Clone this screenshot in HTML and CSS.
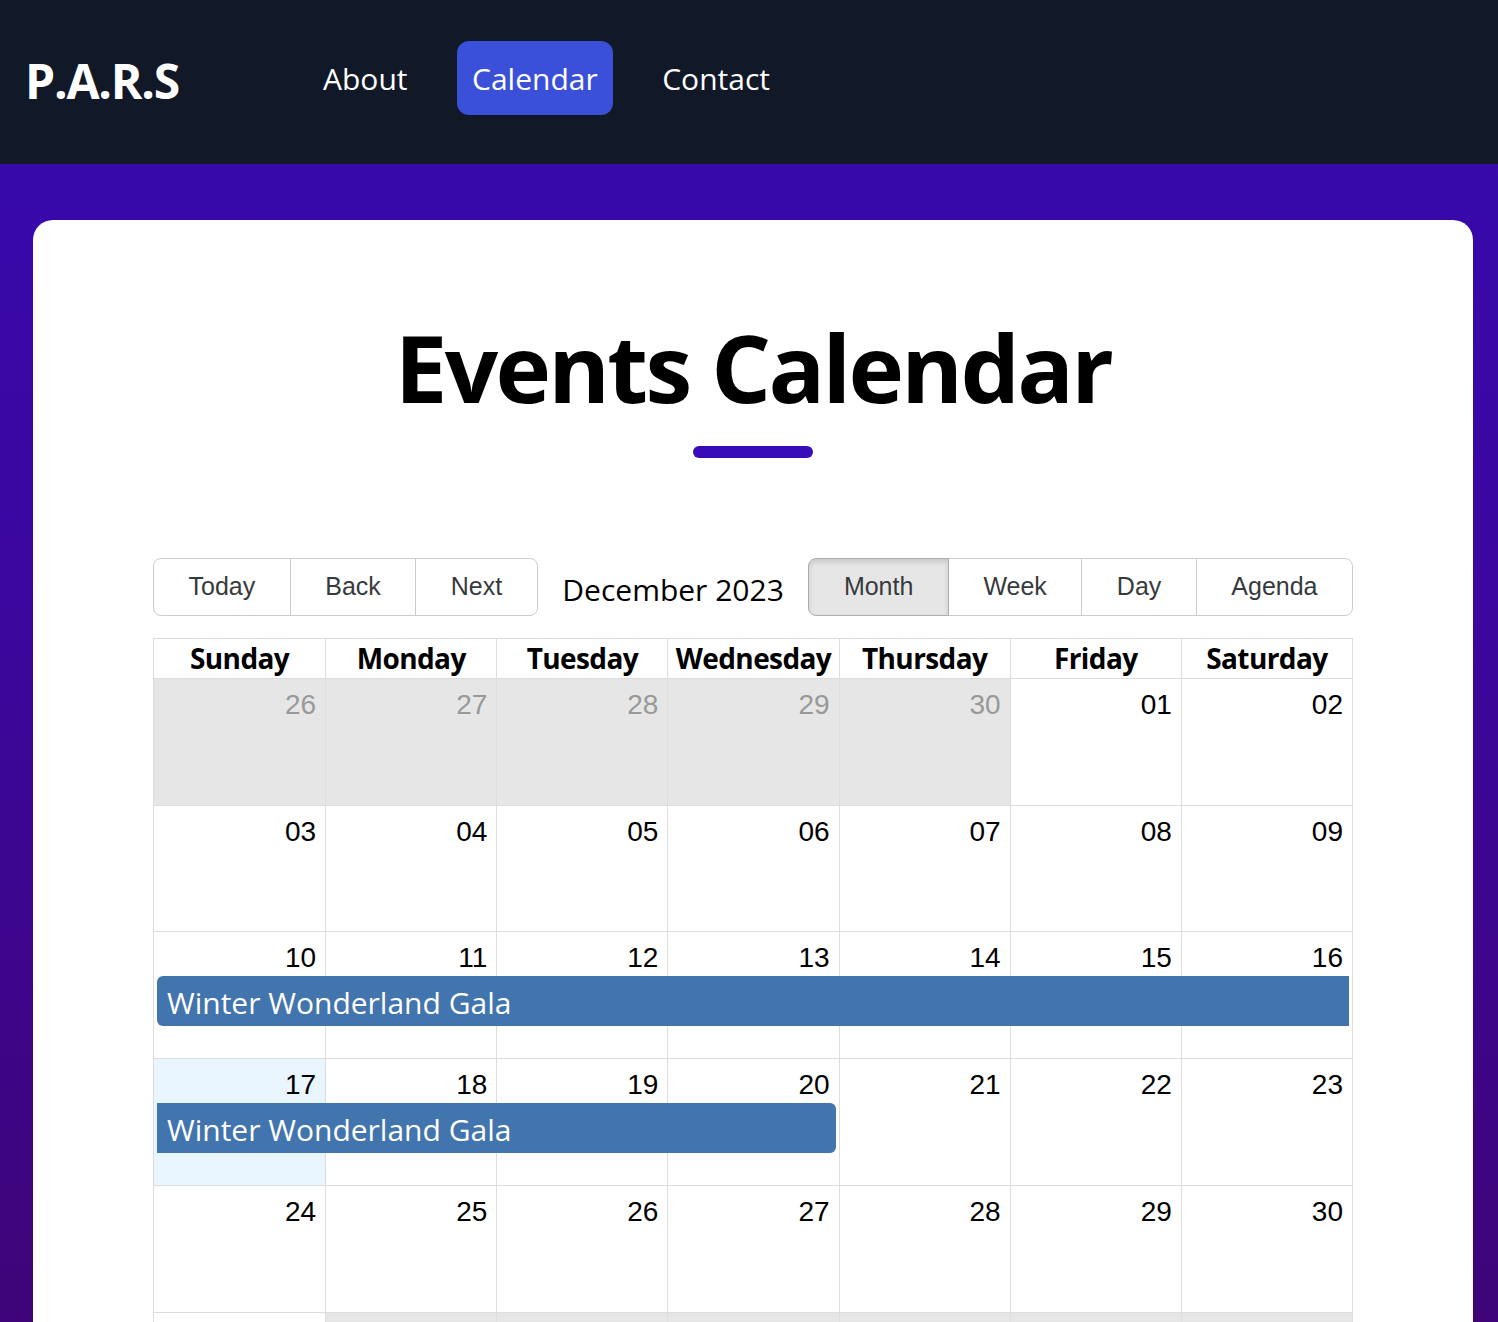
FILE: index.html
```html
<!DOCTYPE html>
<html lang="en">
<head>
<meta charset="utf-8">
<title>P.A.R.S – Events Calendar</title>
<link rel="stylesheet" href="styles.css">
</head>
<body>
<header class="topbar">
  <div class="logo">P.A.R.S</div>
  <nav class="nav">
    <a class="nav-link" href="#">About</a>
    <a class="nav-link active" href="#">Calendar</a>
    <a class="nav-link" href="#">Contact</a>
  </nav>
</header>
<main class="main">
  <section class="card">
    <h1 class="title">Events Calendar</h1>
    <div class="title-bar"></div>

    <div class="calendar">
      <div class="toolbar">
        <div class="btn-group">
          <button class="btn">Today</button>
          <button class="btn">Back</button>
          <button class="btn">Next</button>
        </div>
        <div class="label">December 2023</div>
        <div class="btn-group">
          <button class="btn active">Month</button>
          <button class="btn">Week</button>
          <button class="btn">Day</button>
          <button class="btn">Agenda</button>
        </div>
      </div>

      <div class="month">
        <div class="head">
          <div class="hcell">Sunday</div>
          <div class="hcell">Monday</div>
          <div class="hcell">Tuesday</div>
          <div class="hcell">Wednesday</div>
          <div class="hcell">Thursday</div>
          <div class="hcell">Friday</div>
          <div class="hcell">Saturday</div>
        </div>

        <div class="week">
          <div class="day off"><div class="num">26</div></div>
          <div class="day off"><div class="num">27</div></div>
          <div class="day off"><div class="num">28</div></div>
          <div class="day off"><div class="num">29</div></div>
          <div class="day off"><div class="num">30</div></div>
          <div class="day"><div class="num">01</div></div>
          <div class="day"><div class="num">02</div></div>
        </div>

        <div class="week">
          <div class="day"><div class="num">03</div></div>
          <div class="day"><div class="num">04</div></div>
          <div class="day"><div class="num">05</div></div>
          <div class="day"><div class="num">06</div></div>
          <div class="day"><div class="num">07</div></div>
          <div class="day"><div class="num">08</div></div>
          <div class="day"><div class="num">09</div></div>
        </div>

        <div class="week">
          <div class="day"><div class="num">10</div></div>
          <div class="day"><div class="num">11</div></div>
          <div class="day"><div class="num">12</div></div>
          <div class="day"><div class="num">13</div></div>
          <div class="day"><div class="num">14</div></div>
          <div class="day"><div class="num">15</div></div>
          <div class="day"><div class="num">16</div></div>
          <div class="event span-full cont-right">Winter Wonderland Gala</div>
        </div>

        <div class="week">
          <div class="day today"><div class="num">17</div></div>
          <div class="day"><div class="num">18</div></div>
          <div class="day"><div class="num">19</div></div>
          <div class="day"><div class="num">20</div></div>
          <div class="day"><div class="num">21</div></div>
          <div class="day"><div class="num">22</div></div>
          <div class="day"><div class="num">23</div></div>
          <div class="event span-four cont-left">Winter Wonderland Gala</div>
        </div>

        <div class="week">
          <div class="day"><div class="num">24</div></div>
          <div class="day"><div class="num">25</div></div>
          <div class="day"><div class="num">26</div></div>
          <div class="day"><div class="num">27</div></div>
          <div class="day"><div class="num">28</div></div>
          <div class="day"><div class="num">29</div></div>
          <div class="day"><div class="num">30</div></div>
        </div>

        <div class="week">
          <div class="day"><div class="num">31</div></div>
          <div class="day off"><div class="num">01</div></div>
          <div class="day off"><div class="num">02</div></div>
          <div class="day off"><div class="num">03</div></div>
          <div class="day off"><div class="num">04</div></div>
          <div class="day off"><div class="num">05</div></div>
          <div class="day off"><div class="num">06</div></div>
        </div>
      </div>
    </div>
  </section>
</main>
</body>
</html>
```

FILE: styles.css
```css
* { box-sizing: border-box; }

html, body {
  margin: 0;
  padding: 0;
}

body {
  font-family: "Open Sans", "Noto Sans", sans-serif;
  background: #3e0476;
  color: #000;
}

/* ---------- top bar ---------- */
.topbar {
  height: 164px;
  background: #111827;
  display: flex;
  align-items: center;
  padding: 0 0 8px 25px;
}

.logo {
  color: #fff;
  font-weight: 700;
  font-size: 48px;
  letter-spacing: -1.2px;
  line-height: 1;
  margin-top: 5px;
  margin-right: 129px;
}

.nav {
  display: flex;
  align-items: center;
  gap: 34px;
}

.nav-link {
  color: #fff;
  text-decoration: none;
  font-size: 30px;
  line-height: 42px;
  padding: 17px 15px 15px;
  border-radius: 12px;
}

.nav-link.active {
  background: #3b50d8;
  padding: 17px 15.5px 15px;
}

/* ---------- main ---------- */
.main {
  background: linear-gradient(180deg, #3809ab 0px, #3b07a0 400px, #3e0478 1160px);
  padding: 56px 25px 40px 33px;
}

.card {
  background: #fff;
  border-radius: 20px;
  padding: 91px 120px 80px;
}

.title {
  margin: 0;
  text-align: center;
  font-size: 94px;
  font-weight: 700;
  line-height: 1.2;
  letter-spacing: -2.7px;
}

.title-bar {
  width: 120px;
  height: 12px;
  border-radius: 6px;
  background: #380cb8;
  margin: 22px auto 0;
}

/* ---------- calendar ---------- */
.calendar {
  margin-top: 100px;
}

.toolbar {
  display: flex;
  align-items: center;
  margin-bottom: 22px;
}

.btn-group {
  display: flex;
}

.btn {
  font-family: "Liberation Sans", Arial, sans-serif;
  font-size: 25px;
  color: #373a3c;
  background: #fff;
  border: 1px solid #ccc;
  height: 58px;
  padding: 0 34.5px;
  margin: 0;
  cursor: pointer;
}

.btn + .btn {
  margin-left: -1px;
}

.btn:first-child {
  border-radius: 8px 0 0 8px;
}

.btn:last-child {
  border-radius: 0 8px 8px 0;
}

.btn.active {
  background: #e6e6e6;
  border-color: #adadad;
  box-shadow: inset 0 3px 5px rgba(0, 0, 0, 0.125);
  position: relative;
}

.label {
  flex: 1;
  text-align: center;
  font-size: 30px;
  padding-top: 5px;
  color: #000;
}

.month {
  height: 802px;
  border: 1px solid #ddd;
  display: flex;
  flex-direction: column;
}

.head {
  display: grid;
  grid-template-columns: repeat(7, minmax(0, 1fr));
  height: 39px;
  flex: none;
}

.hcell {
  text-align: center;
  font-weight: 700;
  font-size: 28px;
  line-height: 39px;
  letter-spacing: -0.6px;
  white-space: nowrap;
  overflow: hidden;
}

.hcell + .hcell {
  border-left: 1px solid #ddd;
}

.week {
  flex: 1 1 0;
  min-height: 0;
  display: grid;
  grid-template-columns: repeat(7, minmax(0, 1fr));
  grid-template-rows: 40px auto 1fr;
  border-top: 1px solid #ddd;
}

.day {
  grid-row: 1 / -1;
  background: #fff;
}

.day:nth-child(1) { grid-column: 1; }
.day:nth-child(2) { grid-column: 2; }
.day:nth-child(3) { grid-column: 3; }
.day:nth-child(4) { grid-column: 4; }
.day:nth-child(5) { grid-column: 5; }
.day:nth-child(6) { grid-column: 6; }
.day:nth-child(7) { grid-column: 7; }

.day + .day {
  border-left: 1px solid #ddd;
}

.day.off {
  background: #e6e6e6;
}

.day.off .num {
  color: #999;
}

.day.today {
  background: #eaf6ff;
}

.num {
  font-family: "Liberation Sans", Arial, sans-serif;
  font-size: 28px;
  line-height: 32px;
  text-align: right;
  padding: 10px 9px 0 0;
}

.event {
  grid-row: 2;
  margin: 4px 3px 0 3px;
  background: #4274ad;
  color: #fff;
  font-size: 30px;
  line-height: 40px;
  padding: 7px 10px 3px;
  white-space: nowrap;
  overflow: hidden;
}

.span-full { grid-column: 1 / 8; }
.span-four { grid-column: 1 / 5; }

.cont-right { border-radius: 6px 0 0 6px; }
.cont-left { border-radius: 0 6px 6px 0; }
```
